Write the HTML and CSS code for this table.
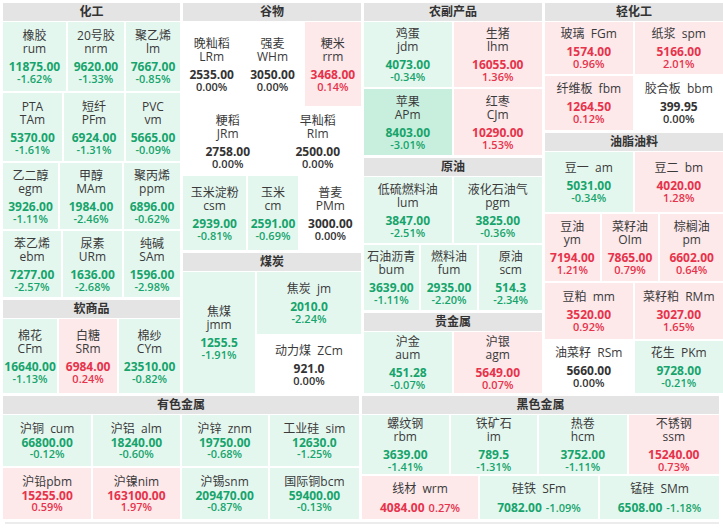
FILE: index.html
```html
<!DOCTYPE html>
<html lang="zh">
<head>
<meta charset="utf-8">
<title>期货板块</title>
<link rel="stylesheet" href="styles.css">
</head>
<body>
<div class="board">
  <div class="top">
    <!-- column 1 -->
    <div class="col">
      <section class="sec">
        <div class="hd">化工</div>
        <div class="bd">
          <div class="row" style="height:69px">
            <div class="c g" style="flex:64"><div class="n">橡胶</div><div class="n">rum</div><div class="v">11875.00</div><div class="p">-1.62%</div></div>
            <div class="c g" style="flex:57"><div class="n">20号胶</div><div class="n">nrm</div><div class="v">9620.00</div><div class="p">-1.33%</div></div>
            <div class="c g" style="flex:55"><div class="n">聚乙烯</div><div class="n">lm</div><div class="v">7667.00</div><div class="p">-0.85%</div></div>
          </div>
          <div class="row" style="height:68px">
            <div class="c g" style="flex:60"><div class="n">PTA</div><div class="n">TAm</div><div class="v">5370.00</div><div class="p">-1.61%</div></div>
            <div class="c g" style="flex:61"><div class="n">短纤</div><div class="n">PFm</div><div class="v">6924.00</div><div class="p">-1.31%</div></div>
            <div class="c g" style="flex:55"><div class="n">PVC</div><div class="n">vm</div><div class="v">5665.00</div><div class="p">-0.09%</div></div>
          </div>
          <div class="row" style="height:66px">
            <div class="c g" style="flex:56"><div class="n">乙二醇</div><div class="n">egm</div><div class="v">3926.00</div><div class="p">-1.11%</div></div>
            <div class="c g" style="flex:63"><div class="n">甲醇</div><div class="n">MAm</div><div class="v">1984.00</div><div class="p">-2.46%</div></div>
            <div class="c g" style="flex:57"><div class="n">聚丙烯</div><div class="n">ppm</div><div class="v">6896.00</div><div class="p">-0.62%</div></div>
          </div>
          <div class="row" style="height:66px">
            <div class="c g" style="flex:59"><div class="n">苯乙烯</div><div class="n">ebm</div><div class="v">7277.00</div><div class="p">-2.57%</div></div>
            <div class="c g" style="flex:60"><div class="n">尿素</div><div class="n">URm</div><div class="v">1636.00</div><div class="p">-2.68%</div></div>
            <div class="c g" style="flex:57"><div class="n">纯碱</div><div class="n">SAm</div><div class="v">1596.00</div><div class="p">-2.98%</div></div>
          </div>
        </div>
      </section>
      <section class="sec grow">
        <div class="hd">软商品</div>
        <div class="bd">
          <div class="row fill">
            <div class="c g" style="flex:55"><div class="n">棉花</div><div class="n">CFm</div><div class="v">16640.00</div><div class="p">-1.13%</div></div>
            <div class="c r" style="flex:59"><div class="n">白糖</div><div class="n">SRm</div><div class="v">6984.00</div><div class="p">0.24%</div></div>
            <div class="c g" style="flex:62"><div class="n">棉纱</div><div class="n">CYm</div><div class="v">23510.00</div><div class="p">-0.82%</div></div>
          </div>
        </div>
      </section>
    </div>

    <!-- column 2 -->
    <div class="col">
      <section class="sec">
        <div class="hd">谷物</div>
        <div class="bd">
          <div class="row" style="height:84px">
            <div class="c z" style="flex:58"><div class="n">晚籼稻</div><div class="n">LRm</div><div class="v">2535.00</div><div class="p">0.00%</div></div>
            <div class="c z" style="flex:61"><div class="n">强麦</div><div class="n">WHm</div><div class="v">3050.00</div><div class="p">0.00%</div></div>
            <div class="c r" style="flex:57"><div class="n">粳米</div><div class="n">rrm</div><div class="v">3468.00</div><div class="p">0.14%</div></div>
          </div>
          <div class="row" style="height:66px">
            <div class="c z" style="flex:90"><div class="n">粳稻</div><div class="n">JRm</div><div class="v">2758.00</div><div class="p">0.00%</div></div>
            <div class="c z" style="flex:87"><div class="n">早籼稻</div><div class="n">RIm</div><div class="v">2500.00</div><div class="p">0.00%</div></div>
          </div>
          <div class="row" style="height:74px">
            <div class="c g" style="flex:64"><div class="n">玉米淀粉</div><div class="n">csm</div><div class="v">2939.00</div><div class="p">-0.81%</div></div>
            <div class="c g" style="flex:50"><div class="n">玉米</div><div class="n">cm</div><div class="v">2591.00</div><div class="p">-0.69%</div></div>
            <div class="c z" style="flex:62"><div class="n">普麦</div><div class="n">PMm</div><div class="v">3000.00</div><div class="p">0.00%</div></div>
          </div>
        </div>
      </section>
      <section class="sec grow">
        <div class="hd">煤炭</div>
        <div class="bd">
          <div class="row fill">
            <div class="c g" style="flex:72"><div class="n">焦煤</div><div class="n">jmm</div><div class="v">1255.5</div><div class="p">-1.91%</div></div>
            <div class="stack" style="flex:104">
              <div class="c g" style="height:62px"><div class="n">焦炭&nbsp;&nbsp;jm</div><div class="v">2010.0</div><div class="p">-2.24%</div></div>
              <div class="c z grow"><div class="n">动力煤&nbsp;&nbsp;ZCm</div><div class="v">921.0</div><div class="p">0.00%</div></div>
            </div>
          </div>
        </div>
      </section>
    </div>

    <!-- column 3 -->
    <div class="col">
      <section class="sec">
        <div class="hd">农副产品</div>
        <div class="bd">
          <div class="row" style="height:65px">
            <div class="c g" style="flex:88"><div class="n">鸡蛋</div><div class="n">jdm</div><div class="v">4073.00</div><div class="p">-0.34%</div></div>
            <div class="c r" style="flex:89"><div class="n">生猪</div><div class="n">lhm</div><div class="v">16055.00</div><div class="p">1.36%</div></div>
          </div>
          <div class="row" style="height:66px">
            <div class="c g2" style="flex:88"><div class="n">苹果</div><div class="n">APm</div><div class="v">8403.00</div><div class="p">-3.01%</div></div>
            <div class="c r" style="flex:89"><div class="n">红枣</div><div class="n">CJm</div><div class="v">10290.00</div><div class="p">1.53%</div></div>
          </div>
        </div>
      </section>
      <section class="sec">
        <div class="hd">原油</div>
        <div class="bd">
          <div class="row" style="height:66px">
            <div class="c g" style="flex:88"><div class="n">低硫燃料油</div><div class="n">lum</div><div class="v">3847.00</div><div class="p">-2.51%</div></div>
            <div class="c g" style="flex:89"><div class="n">液化石油气</div><div class="n">pgm</div><div class="v">3825.00</div><div class="p">-0.36%</div></div>
          </div>
          <div class="row" style="height:65px">
            <div class="c g" style="flex:55"><div class="n">石油沥青</div><div class="n">bum</div><div class="v">3639.00</div><div class="p">-1.11%</div></div>
            <div class="c g" style="flex:57"><div class="n">燃料油</div><div class="n">fum</div><div class="v">2935.00</div><div class="p">-2.20%</div></div>
            <div class="c g" style="flex:63"><div class="n">原油</div><div class="n">scm</div><div class="v">514.3</div><div class="p">-2.34%</div></div>
          </div>
        </div>
      </section>
      <section class="sec grow">
        <div class="hd">贵金属</div>
        <div class="bd">
          <div class="row fill">
            <div class="c g" style="flex:88"><div class="n">沪金</div><div class="n">aum</div><div class="v">451.28</div><div class="p">-0.07%</div></div>
            <div class="c r" style="flex:89"><div class="n">沪银</div><div class="n">agm</div><div class="v">5649.00</div><div class="p">0.07%</div></div>
          </div>
        </div>
      </section>
    </div>

    <!-- column 4 -->
    <div class="col">
      <section class="sec">
        <div class="hd">轻化工</div>
        <div class="bd">
          <div class="row" style="height:52px">
            <div class="c r" style="flex:88"><div class="n">玻璃&nbsp;&nbsp;FGm</div><div class="v">1574.00</div><div class="p">0.96%</div></div>
            <div class="c r" style="flex:89"><div class="n">纸浆&nbsp;&nbsp;spm</div><div class="v">5166.00</div><div class="p">2.01%</div></div>
          </div>
          <div class="row" style="height:54px">
            <div class="c r" style="flex:88"><div class="n">纤维板&nbsp;&nbsp;fbm</div><div class="v">1264.50</div><div class="p">0.12%</div></div>
            <div class="c z" style="flex:89"><div class="n">胶合板&nbsp;&nbsp;bbm</div><div class="v">399.95</div><div class="p">0.00%</div></div>
          </div>
        </div>
      </section>
      <section class="sec grow">
        <div class="hd">油脂油料</div>
        <div class="bd">
          <div class="row" style="height:60px">
            <div class="c g" style="flex:88"><div class="n">豆一&nbsp;&nbsp;am</div><div class="v">5031.00</div><div class="p">-0.34%</div></div>
            <div class="c r" style="flex:89"><div class="n">豆二&nbsp;&nbsp;bm</div><div class="v">4020.00</div><div class="p">1.28%</div></div>
          </div>
          <div class="row" style="height:67px">
            <div class="c r" style="flex:55"><div class="n">豆油</div><div class="n">ym</div><div class="v">7194.00</div><div class="p">1.21%</div></div>
            <div class="c r" style="flex:57"><div class="n">菜籽油</div><div class="n">OIm</div><div class="v">7865.00</div><div class="p">0.79%</div></div>
            <div class="c r" style="flex:63"><div class="n">棕榈油</div><div class="n">pm</div><div class="v">6602.00</div><div class="p">0.64%</div></div>
          </div>
          <div class="row" style="height:56px">
            <div class="c r" style="flex:88"><div class="n">豆粕&nbsp;&nbsp;mm</div><div class="v">3520.00</div><div class="p">0.92%</div></div>
            <div class="c r" style="flex:89"><div class="n">菜籽粕&nbsp;&nbsp;RMm</div><div class="v">3027.00</div><div class="p">1.65%</div></div>
          </div>
          <div class="row fill">
            <div class="c z" style="flex:88"><div class="n">油菜籽&nbsp;&nbsp;RSm</div><div class="v">5660.00</div><div class="p">0.00%</div></div>
            <div class="c g" style="flex:89"><div class="n">花生&nbsp;&nbsp;PKm</div><div class="v">9728.00</div><div class="p">-0.21%</div></div>
          </div>
        </div>
      </section>
    </div>
  </div>

  <div class="bottom">
    <section class="sec">
      <div class="hd">有色金属</div>
      <div class="bd">
        <div class="row" style="height:51px">
          <div class="c g tight" style="flex:89"><div class="n">沪铜&nbsp;&nbsp;cum</div><div class="v">66800.00</div><div class="p">-0.12%</div></div>
          <div class="c g tight" style="flex:87"><div class="n">沪铝&nbsp;&nbsp;alm</div><div class="v">18240.00</div><div class="p">-0.60%</div></div>
          <div class="c g tight" style="flex:87"><div class="n">沪锌&nbsp;&nbsp;znm</div><div class="v">19750.00</div><div class="p">-0.68%</div></div>
          <div class="c g tight" style="flex:90"><div class="n">工业硅&nbsp;&nbsp;sim</div><div class="v">12630.0</div><div class="p">-1.25%</div></div>
        </div>
        <div class="row fill">
          <div class="c r tight" style="flex:89"><div class="n">沪铅pbm</div><div class="v">15255.00</div><div class="p">0.59%</div></div>
          <div class="c r tight" style="flex:87"><div class="n">沪镍nim</div><div class="v">163100.00</div><div class="p">1.97%</div></div>
          <div class="c g tight" style="flex:87"><div class="n">沪锡snm</div><div class="v">209470.00</div><div class="p">-0.87%</div></div>
          <div class="c g tight" style="flex:90"><div class="n">国际铜bcm</div><div class="v">59400.00</div><div class="p">-0.13%</div></div>
        </div>
      </div>
    </section>
    <section class="sec">
      <div class="hd">黑色金属</div>
      <div class="bd">
        <div class="row" style="height:59px">
          <div class="c g" style="flex:87"><div class="n">螺纹钢</div><div class="n">rbm</div><div class="v">3639.00</div><div class="p">-1.41%</div></div>
          <div class="c g" style="flex:87"><div class="n">铁矿石</div><div class="n">im</div><div class="v">789.5</div><div class="p">-1.31%</div></div>
          <div class="c g" style="flex:88"><div class="n">热卷</div><div class="n">hcm</div><div class="v">3752.00</div><div class="p">-1.11%</div></div>
          <div class="c r" style="flex:91"><div class="n">不锈钢</div><div class="n">ssm</div><div class="v">15240.00</div><div class="p">0.73%</div></div>
        </div>
        <div class="row fill">
          <div class="c r" style="flex:116"><div class="n">线材&nbsp;&nbsp;wrm</div><div class="inl"><span class="v">4084.00</span><span class="p">0.27%</span></div></div>
          <div class="c g" style="flex:118"><div class="n">硅铁&nbsp;&nbsp;SFm</div><div class="inl"><span class="v">7082.00</span><span class="p">-1.09%</span></div></div>
          <div class="c g" style="flex:119"><div class="n">锰硅&nbsp;&nbsp;SMm</div><div class="inl"><span class="v">6508.00</span><span class="p">-1.18%</span></div></div>
        </div>
      </div>
    </section>
  </div>
  <div class="foot"></div>
</div>
</body>
</html>
```

FILE: styles.css
```css
* { box-sizing: border-box; }
html, body { margin: 0; padding: 0; background: #fff; }
body {
  font-family: "Open Sans", "Noto Sans CJK SC", sans-serif;
  color: #333;
  width: 723px;
  height: 532px;
  overflow: hidden;
}
.board {
  padding: 3px 4px 0 3px;
}
.top {
  display: grid;
  grid-template-columns: 177px 178px 178px 178px;
  column-gap: 3px;
  height: 390px;
}
.col {
  display: flex;
  flex-direction: column;
  gap: 3px;
  min-height: 0;
}
.sec {
  display: flex;
  flex-direction: column;
  min-height: 0;
}
.grow { flex: 1 1 0; min-height: 0; }
.hd {
  height: 18px;
  line-height: 18px;
  background: #e4e4e4;
  text-align: center;
  font-size: 12px;
  font-weight: 700;
  color: #333;
  margin-bottom: 1px;
  flex: none;
}
.bd {
  display: flex;
  flex-direction: column;
  gap: 2px;
  flex: 1 1 auto;
  min-height: 0;
}
.row {
  display: flex;
  gap: 2px;
  flex: none;
}
.row.fill { flex: 1 1 0; min-height: 0; }
.stack {
  display: flex;
  flex-direction: column;
  gap: 2px;
  min-width: 0;
}
.c {
  flex-basis: 0;
  min-width: 0;
  display: flex;
  flex-direction: column;
  align-items: center;
  justify-content: center;
  text-align: center;
  white-space: nowrap;
}
.stack .c { flex: none; }
.stack .c.grow { flex: 1 1 0; }
.n {
  font-size: 12px;
  line-height: 13px;
  color: #3a3a3a;
}
.v {
  font-size: 12px;
  line-height: 12px;
  font-weight: 700;
  margin-top: 6px;
}
.p {
  font-size: 11px;
  line-height: 11px;
  font-weight: 600;
}
.tight .v { margin-top: 2px; }
.tight .p { line-height: 10px; }
.inl {
  margin-top: 7px;
  display: flex;
  align-items: baseline;
  gap: 4px;
}
.inl .v { margin-top: 0; }
.inl .p { font-size: 11px; }

.g { background: #e4f7ef; }
.g2 { background: #c8efdd; }
.r { background: #fde8ea; }
.z { background: #fff; }
.g .v, .g .p, .g2 .v, .g2 .p { color: #17a46c; }
.r .v, .r .p { color: #e6334b; }
.z .v, .z .p { color: #333; }

.bottom {
  display: grid;
  grid-template-columns: 356px 357px;
  column-gap: 3px;
  margin-top: 3px;
  height: 123px;
}
.foot {
  margin-top: 3px;
  margin-left: 2px;
  height: 2px;
  background: #ececec;
}
```
